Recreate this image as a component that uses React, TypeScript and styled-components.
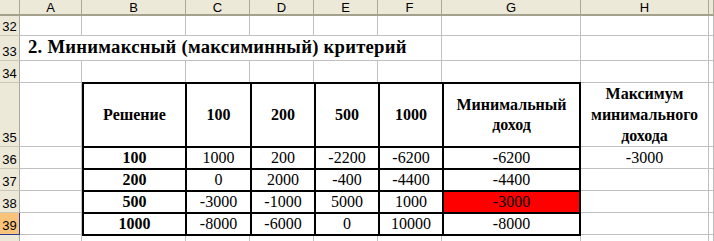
import React from "react";
import styled, { createGlobalStyle } from "styled-components";

const Global = createGlobalStyle`
  html, body { margin: 0; padding: 0; background: #ffffff; }
  body { width: 714px; height: 241px; overflow: hidden; }
  * { box-sizing: border-box; }
`;

const Sheet = styled.div`
  display: grid;
  grid-template-columns: 20px 62px 104px 64px 64px 64px 64px 139px 128px 1fr;
  grid-template-rows: 16px 20px 25px 22px 64px 22px 22px 22px 22px 22px;
  width: 714px;
  height: 241px;
  overflow: hidden;
  background: #ffffff;
  font-family: "Liberation Serif", "Times New Roman", serif;
  color: #000000;
`;

const HeadBase = styled.div`
  background: #ece9d8;
  font-family: "Liberation Sans", Arial, sans-serif;
  font-size: 13px;
  color: #000000;
  display: flex;
  justify-content: center;
`;

const Corner = styled(HeadBase)`
  border-right: 1px solid #aca899;
  border-bottom: 2px solid #a3a08c;
`;

const ColHead = styled(HeadBase)`
  align-items: center;
  border-right: 1px solid #aca899;
  border-bottom: 2px solid #a3a08c;
  line-height: 14px;
  padding-top: 1px;
`;

const RowHead = styled(HeadBase)<{ $active?: boolean }>`
  align-items: flex-end;
  line-height: 15px;
  padding-bottom: 1px;
  background: ${(p) => (p.$active ? "#f9c37c" : "#ece9d8")};
  border-right: 1px solid ${(p) => (p.$active ? "#2a3d8f" : "#aca899")};
  border-bottom: 1px solid ${(p) => (p.$active ? "#2a3d8f" : "#cbc8b8")};
`;

const Cell = styled.div`
  border-right: 1px solid #c0c0c0;
  border-bottom: 1px solid #c0c0c0;
  display: flex;
  align-items: flex-end;
  justify-content: center;
  font-size: 16px;
  line-height: 18px;
  padding-bottom: 1px;
`;

const TitleCell = styled.div`
  grid-column: span 6;
  border-right: 1px solid #c0c0c0;
  border-bottom: 1px solid #c0c0c0;
  display: flex;
  align-items: flex-end;
  padding: 0 0 3px 8px;
  font-size: 18.67px;
  font-weight: bold;
  line-height: 21px;
  letter-spacing: 0.25px;
  white-space: nowrap;
`;

const HeadNote = styled(Cell)`
  flex-direction: column;
  align-items: center;
  justify-content: flex-end;
  font-weight: bold;
  line-height: 21px;
  padding-bottom: 0;
`;

const Table = styled.div`
  grid-column: 3 / 9;
  grid-row: 5 / 10;
  margin: -1px 0;
  display: grid;
  grid-template-columns: 101px 63px 62px 62px 62px 135px;
  grid-template-rows: 62px 20px 20px 20px 20px;
  gap: 2px;
  padding: 2px;
  background: #000000;
`;

const TCell = styled.div<{ $bold?: boolean; $red?: boolean; $head?: boolean }>`
  background: ${(p) => (p.$red ? "#ff0000" : "#ffffff")};
  display: flex;
  flex-direction: column;
  justify-content: ${(p) => (p.$head ? "center" : "flex-end")};
  align-items: center;
  font-size: 16px;
  font-weight: ${(p) => (p.$bold ? "bold" : "normal")};
  line-height: ${(p) => (p.$head ? "20px" : "18px")};
  padding-bottom: ${(p) => (p.$head ? "0" : "1px")};
  text-align: center;
  white-space: nowrap;
`;

const cols = ["A", "B", "C", "D", "E", "F", "G", "H", ""];

const headers = ["Решение", "100", "200", "500", "1000"];
const rows: { label: string; values: string[]; min: string; red?: boolean }[] = [
  { label: "100", values: ["1000", "200", "-2200", "-6200"], min: "-6200" },
  { label: "200", values: ["0", "2000", "-400", "-4400"], min: "-4400" },
  { label: "500", values: ["-3000", "-1000", "5000", "1000"], min: "-3000", red: true },
  { label: "1000", values: ["-8000", "-6000", "0", "10000"], min: "-8000" },
];

const blankRow = (n: number) =>
  Array.from({ length: 9 }, (_, i) => <Cell key={`r${n}c${i}`} />);

export default function App() {
  return (
    <>
      <Global />
      <Sheet>
        <Corner />
        {cols.map((c, i) => (
          <ColHead key={`h${i}`}>{c}</ColHead>
        ))}

        <RowHead>32</RowHead>
        {blankRow(32)}

        <RowHead>33</RowHead>
        <TitleCell>2. Минимаксный (максиминный) критерий</TitleCell>
        <Cell />
        <Cell />
        <Cell />

        <RowHead>34</RowHead>
        {blankRow(34)}

        <RowHead>35</RowHead>
        <Cell />
        <HeadNote>
          <span>Максимум</span>
          <span>минимального</span>
          <span>дохода</span>
        </HeadNote>
        <Cell />

        <RowHead>36</RowHead>
        <Cell />
        <Cell>-3000</Cell>
        <Cell />

        <RowHead>37</RowHead>
        <Cell />
        <Cell />
        <Cell />

        <RowHead>38</RowHead>
        <Cell />
        <Cell />
        <Cell />

        <RowHead $active>39</RowHead>
        <Cell />
        <Cell />
        <Cell />

        <RowHead />
        {blankRow(40)}

        <Table>
          {headers.map((h, i) => (
            <TCell key={`th${i}`} $bold $head>
              {h}
            </TCell>
          ))}
          <TCell $bold $head>
            <span>Минимальный</span>
            <span>доход</span>
          </TCell>
          {rows.map((r, ri) => (
            <React.Fragment key={`tr${ri}`}>
              <TCell $bold>{r.label}</TCell>
              {r.values.map((v, vi) => (
                <TCell key={`v${vi}`}>{v}</TCell>
              ))}
              <TCell $red={r.red}>{r.min}</TCell>
            </React.Fragment>
          ))}
        </Table>
      </Sheet>
    </>
  );
}
